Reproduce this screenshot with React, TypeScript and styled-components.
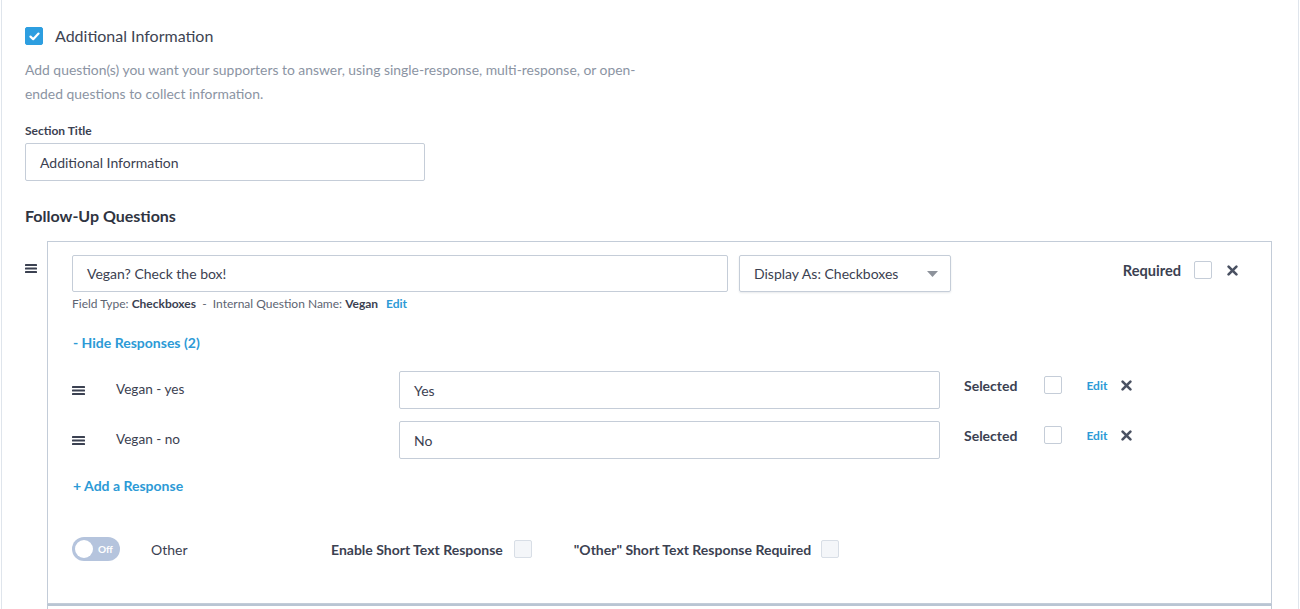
import styled, { createGlobalStyle } from "styled-components"

const GlobalStyle = createGlobalStyle`
  * { box-sizing: border-box; }
  body {
    margin: 0;
    background: #fff;
    font-family: Lato, "Open Sans", sans-serif;
    color: #3b4151;
  }
`

const Panel = styled.section`
  margin: 0 1px;
  border-left: 1px solid #dfe5ec;
  border-right: 1px solid #dfe5ec;
  padding: 27px 26px 0 23px;
  min-height: 609px;
`

const Header = styled.label`
  display: flex;
  align-items: center;
  gap: 12px;
  font-size: 16px;
  line-height: 18px;
  color: #3e4452;
  height: 18px;
`

const Box = styled.span<{ $checked?: boolean; $muted?: boolean }>`
  display: inline-flex;
  align-items: center;
  justify-content: center;
  flex: none;
  width: 18px;
  height: 18px;
  border-radius: 2px;
  background: ${p => (p.$checked ? "#2d9ee0" : p.$muted ? "#f4f6f9" : "#fff")};
  border: 1px solid ${p => (p.$checked ? "#2d9ee0" : p.$muted ? "#d8dee6" : "#c5cdd8")};
`

const Description = styled.p`
  margin: 13px 0 0;
  max-width: 620px;
  font-size: 13.9px;
  line-height: 24px;
  color: #8b94a3;
`

const FieldLabel = styled.div`
  margin-top: 18px;
  font-size: 12px;
  line-height: 14px;
  font-weight: 700;
  color: #3b4151;
`

const TextBox = styled.div<{ $width: number; $height?: number }>`
  display: flex;
  align-items: center;
  width: ${p => p.$width}px;
  height: ${p => p.$height ?? 38}px;
  padding: 0 14px;
  border: 1px solid #c5cdd8;
  border-radius: 2px;
  font-size: 14px;
  color: #3b4151;
  flex: none;
`

const SectionInput = styled(TextBox)`
  margin-top: 5px;
`

const SubHeading = styled.h3`
  margin: 25px 0 0;
  font-size: 16px;
  line-height: 20px;
  font-weight: 700;
  color: #2f3441;
`

const Questions = styled.div`
  margin-top: 15px;
`

const QuestionRow = styled.div`
  display: flex;
`

const Grip = styled.div<{ $width: number; $top?: number }>`
  width: ${p => p.$width}px;
  flex: none;
  padding-top: ${p => p.$top ?? 0}px;
  color: #3b4151;
  display: flex;
`

const Card = styled.div`
  flex: 1;
  border: 1px solid #c3ccd8;
  padding: 13px 33px 42px 24px;

  &.stub {
    min-height: 60px;
    padding: 0;
    border-top-width: 2px;
    border-top-color: #b9c5d3;
  }
`

const TopRow = styled.div`
  display: flex;
  align-items: flex-start;
  gap: 11px;
`

const Select = styled(TextBox)`
  justify-content: space-between;
  padding-right: 12px;
  box-shadow: 0 1px 2px rgba(60, 70, 90, 0.12);
`

const RequiredGroup = styled.div`
  margin-left: auto;
  margin-top: 6px;
  display: flex;
  align-items: center;
  height: 18px;
`

const StrongLabel = styled.span<{ $gap: number; $size?: number }>`
  font-size: ${p => p.$size ?? 14}px;
  font-weight: 700;
  color: #3b4151;
  margin-right: ${p => p.$gap}px;
  white-space: nowrap;
`

const CloseBtn = styled.span<{ $left: number }>`
  margin-left: ${p => p.$left}px;
  display: inline-flex;
  color: #4a5162;
`

const Meta = styled.div`
  margin-top: 5px;
  font-size: 12px;
  line-height: 14px;
  color: #5d6472;

  b { color: #3b4151; font-weight: 700; }
`

const Link = styled.span<{ $size?: number }>`
  color: #2c9ad6;
  font-size: ${p => p.$size ?? 14}px;
  font-weight: 700;
`

const MetaEdit = styled(Link)`
  margin-left: 5px;
`

const Toggler = styled.div<{ $top: number }>`
  margin-top: ${p => p.$top}px;
  padding-left: 1px;
  line-height: 18px;
`

const Responses = styled.div`
  margin-top: 19px;
  display: flex;
  flex-direction: column;
  gap: 12px;
`

const ResponseRow = styled.div`
  display: flex;
  align-items: center;
`

const ResponseName = styled.span`
  width: 283px;
  font-size: 13.6px;
  color: #3b4151;
  margin-top: -2px;
  flex: none;
`

const ResponseActions = styled.div`
  display: flex;
  align-items: center;
  margin-left: 24px;
  margin-top: -10px;
`

const EditLink = styled(Link)`
  margin-left: 24px;
  font-size: 12px;
`

const OtherRow = styled.div`
  margin-top: 42px;
  display: flex;
  align-items: center;
`

const Switch = styled.div`
  width: 48px;
  height: 24px;
  border-radius: 12px;
  background: #b5c4dd;
  display: flex;
  align-items: center;
  padding: 0 3px;
  gap: 5px;
  margin-right: 31px;
  flex: none;

  &::before {
    content: "";
    width: 18px;
    height: 18px;
    border-radius: 50%;
    background: #fff;
  }

  span {
    color: #fff;
    font-size: 10px;
    font-weight: 700;
  }
`

const OtherLabel = styled.span`
  width: 180px;
  font-size: 14px;
  color: #3b4151;
  flex: none;
`

const Option = styled.div<{ $gap?: number }>`
  display: flex;
  align-items: center;
  margin-right: ${p => p.$gap ?? 0}px;
`

const Bars = ({ w = 12 }: { w?: number }) => (
  <svg width={w} height="9" viewBox={`0 0 ${w} 9`}>
    <rect x="0" y="0" width={w} height="2" rx="0.6" fill="currentColor" />
    <rect x="0" y="3.5" width={w} height="2" rx="0.6" fill="currentColor" />
    <rect x="0" y="7" width={w} height="2" rx="0.6" fill="currentColor" />
  </svg>
)

const Cross = () => (
  <svg width="11" height="11" viewBox="0 0 11 11">
    <path d="M1.6 1.6 L9.4 9.4 M9.4 1.6 L1.6 9.4" stroke="currentColor" strokeWidth="2.6" strokeLinecap="round" />
  </svg>
)

const Tick = () => (
  <svg width="11" height="9" viewBox="0 0 11 9">
    <path d="M1.5 4.6 L4.2 7.2 L9.5 1.6" fill="none" stroke="#fff" strokeWidth="2.2" strokeLinecap="round" strokeLinejoin="round" />
  </svg>
)

const Caret = () => (
  <svg width="11" height="6" viewBox="0 0 11 6">
    <path d="M0 0 H11 L5.5 6 Z" fill="#8d929b" />
  </svg>
)

const responses = [
  { name: "Vegan - yes", value: "Yes" },
  { name: "Vegan - no", value: "No" },
]

export default function App() {
  return (
    <>
      <GlobalStyle />
      <Panel>
        <Header>
          <Box $checked><Tick /></Box>
          Additional Information
        </Header>
        <Description>
          Add question(s) you want your supporters to answer, using single-response, multi-response, or open-ended questions to collect information.
        </Description>

        <FieldLabel>Section Title</FieldLabel>
        <SectionInput $width={400}>Additional Information</SectionInput>

        <SubHeading>Follow-Up Questions</SubHeading>

        <Questions>
          <QuestionRow>
            <Grip $width={22} $top={23}><Bars /></Grip>
            <Card>
              <TopRow>
                <TextBox $width={656} $height={37}>Vegan? Check the box!</TextBox>
                <Select $width={212} $height={37}>
                  Display As: Checkboxes
                  <Caret />
                </Select>
                <RequiredGroup>
                  <StrongLabel $gap={13} $size={14.6}>Required</StrongLabel>
                  <Box />
                  <CloseBtn $left={15}><Cross /></CloseBtn>
                </RequiredGroup>
              </TopRow>

              <Meta>
                Field Type: <b>Checkboxes</b>&nbsp; - &nbsp;Internal Question Name: <b>Vegan</b>
                <MetaEdit $size={12}> Edit</MetaEdit>
              </Meta>

              <Toggler $top={22}><Link>- Hide Responses (2)</Link></Toggler>

              <Responses>
                {responses.map(r => (
                  <ResponseRow key={r.value}>
                    <Grip $width={44}><Bars w={13} /></Grip>
                    <ResponseName>{r.name}</ResponseName>
                    <TextBox $width={541}>{r.value}</TextBox>
                    <ResponseActions>
                      <StrongLabel $gap={27}>Selected</StrongLabel>
                      <Box />
                      <EditLink>Edit</EditLink>
                      <CloseBtn $left={14}><Cross /></CloseBtn>
                    </ResponseActions>
                  </ResponseRow>
                ))}
              </Responses>

              <Toggler $top={17}><Link>+ Add a Response</Link></Toggler>

              <OtherRow>
                <Switch><span>Off</span></Switch>
                <OtherLabel>Other</OtherLabel>
                <Option $gap={42}>
                  <StrongLabel $gap={11}>Enable Short Text Response</StrongLabel>
                  <Box $muted />
                </Option>
                <Option>
                  <StrongLabel $gap={10}>"Other" Short Text Response Required</StrongLabel>
                  <Box $muted />
                </Option>
              </OtherRow>
            </Card>
          </QuestionRow>
          <QuestionRow>
            <Grip $width={22} />
            <Card className="stub" />
          </QuestionRow>
        </Questions>
      </Panel>
    </>
  )
}
